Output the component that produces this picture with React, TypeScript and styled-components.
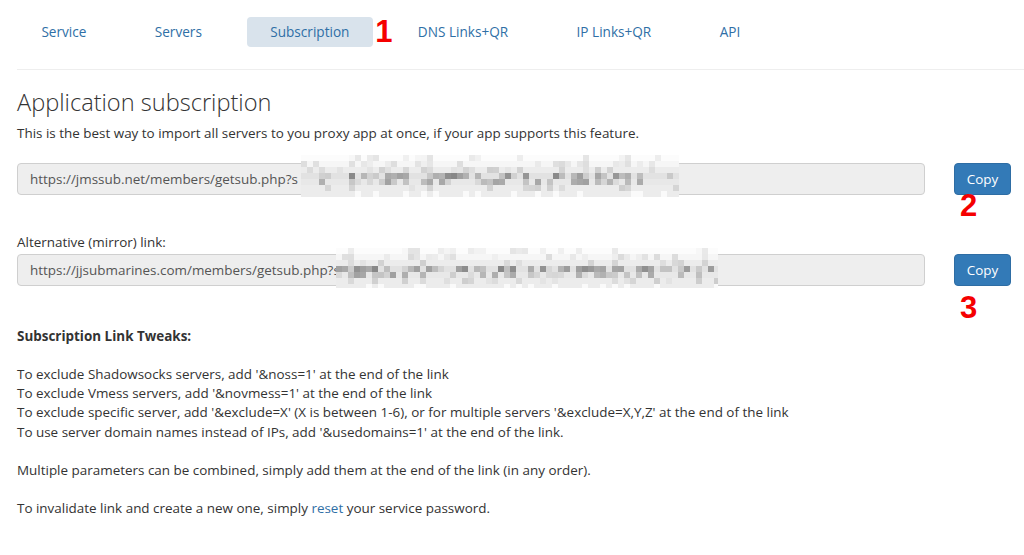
import React from "react";
import styled, { createGlobalStyle } from "styled-components";

const Global = createGlobalStyle`
  html, body { margin: 0; padding: 0; background: #fff; }
  body { font-family: "Open Sans", "Liberation Sans", sans-serif; color: #333; font-size: 13.45px; }
  * { box-sizing: border-box; }
`;

const Page = styled.div`
  width: 1024px;
  height: 555px;
  overflow: hidden;
  padding-left: 17px;
`;

const Nav = styled.nav`
  display: flex;
  gap: 22.2px;
  padding: 17px 0 22px 1.3px;
  border-bottom: 1px solid #eeeeee;
`;

const Tab = styled.a<{ $active?: boolean }>`
  position: relative;
  display: block;
  padding: 5px 23.1px;
  line-height: 20px;
  font-size: 13.6px;
  color: #2f6fa6;
  text-decoration: none;
  border-radius: 4px;
  background: ${(p) => (p.$active ? "#d9e3ec" : "transparent")};
`;

const Marker = styled.span<{ $left: number; $top: number }>`
  position: absolute;
  left: ${(p) => p.$left}px;
  top: ${(p) => p.$top}px;
  font-family: "Liberation Sans", Arial, sans-serif;
  font-weight: 700;
  font-size: 31px;
  line-height: 1;
  color: #f50000;
  pointer-events: none;
`;

const Main = styled.main`
  padding-right: 13px;
`;

const Heading = styled.h2`
  margin: 17px 0 7px;
  font-family: "Open Sans", sans-serif;
  font-weight: 300;
  font-size: 23.6px;
  line-height: 30px;
  color: #333;
`;

const Text = styled.p<{ $mt?: number }>`
  margin: ${(p) => p.$mt ?? 0}px 0 0;
  font-size: 13.45px;
  line-height: 19.1px;
  color: #333;
`;

const Strong = styled.strong`
  font-weight: 700;
`;

const Link = styled.a`
  color: #2f6fa6;
  text-decoration: none;
`;

const Row = styled.div<{ $mt: number }>`
  display: flex;
  align-items: center;
  gap: 29px;
  margin-top: ${(p) => p.$mt}px;
`;

const Field = styled.div`
  position: relative;
  flex: 1;
  height: 32px;
  padding: 0 12px;
  display: flex;
  align-items: center;
  background: #eeeeee;
  border: 1px solid #cfcfcf;
  border-radius: 4px;
  font-size: 13.45px;
  color: #555;
  white-space: nowrap;
`;

const Mosaic = styled.svg<{ $left: number; $top: number }>`
  position: absolute;
  left: ${(p) => p.$left}px;
  top: ${(p) => p.$top}px;
`;

const ButtonWrap = styled.div`
  position: relative;
  width: 57px;
`;

const CopyButton = styled.button`
  width: 57px;
  height: 32px;
  border: 1px solid #2e6da4;
  border-radius: 4px;
  background: #337ab7;
  color: #fff;
  font-family: "Open Sans", sans-serif;
  font-size: 13.45px;
  padding: 0;
`;

const Label = styled.div`
  margin-top: 38px;
  font-size: 13.45px;
  line-height: 19px;
  color: #333;
`;

function rng(seed: number) {
  let s = seed;
  return () => {
    s = (s * 1103515245 + 12345) & 0x7fffffff;
    return s / 0x7fffffff;
  };
}

function MosaicBlock({ width, height, seed, left, top }: { width: number; height: number; seed: number; left: number; top: number }) {
  const r = rng(seed);
  const cell = 6;
  const cols = Math.ceil(width / cell);
  const rows = Math.ceil(height / cell);
  const cells: React.ReactNode[] = [];
  for (let y = 0; y < rows; y++) {
    for (let x = 0; x < cols; x++) {
      const v = r();
      let g: number;
      if (y === 0) g = v < 0.25 ? 228 + Math.floor(r() * 20) : 252;
      else if (y === 1) g = v < 0.35 ? 218 + Math.floor(r() * 22) : 246;
      else if (y === rows - 1) g = v < 0.2 ? 250 : 236;
      else if (y === 3) g = v < 0.6 ? 135 + Math.floor(r() * 80) : 226;
      else if (y === 4) g = v < 0.45 ? 160 + Math.floor(r() * 60) : 232;
      else g = v < 0.25 ? 205 + Math.floor(r() * 25) : 236;
      cells.push(<rect key={`${x}-${y}`} x={x * cell} y={y * cell} width={cell} height={cell} fill={`rgb(${g},${g},${g})`} />);
    }
  }
  return (
    <Mosaic $left={left} $top={top} width={width} height={height} viewBox={`0 0 ${width} ${height}`}>
      {cells}
    </Mosaic>
  );
}

export default function App() {
  return (
    <Page>
      <Global />
      <Nav>
        <Tab>Service</Tab>
        <Tab>Servers</Tab>
        <Tab $active>
          Subscription
          <Marker $left={128} $top={-1}>1</Marker>
        </Tab>
        <Tab>DNS Links+QR</Tab>
        <Tab>IP Links+QR</Tab>
        <Tab>API</Tab>
      </Nav>
      <Main>
        <Heading>Application subscription</Heading>
        <Text>This is the best way to import all servers to you proxy app at once, if your app supports this feature.</Text>
        <Row $mt={20}>
          <Field>
            https://jmssub.net/members/getsub.php?s
            <MosaicBlock width={378} height={42} seed={7} left={283} top={-9} />
          </Field>
          <ButtonWrap>
            <CopyButton>Copy</CopyButton>
            <Marker $left={6} $top={27}>2</Marker>
          </ButtonWrap>
        </Row>
        <Label>Alternative (mirror) link:</Label>
        <Row $mt={2}>
          <Field>
            https://jjsubmarines.com/members/getsub.php?s
            <MosaicBlock width={382} height={40} seed={31} left={318} top={-7} />
          </Field>
          <ButtonWrap>
            <CopyButton>Copy</CopyButton>
            <Marker $left={6} $top={38}>3</Marker>
          </ButtonWrap>
        </Row>
        <Text $mt={41}>
          <Strong>Subscription Link Tweaks:</Strong>
          <br />
          <br />
          To exclude Shadowsocks servers, add '&amp;noss=1' at the end of the link
          <br />
          To exclude Vmess servers, add '&amp;novmess=1' at the end of the link
          <br />
          To exclude specific server, add '&amp;exclude=X' (X is between 1-6), or for multiple servers '&amp;exclude=X,Y,Z' at the end of the link
          <br />
          To use server domain names instead of IPs, add '&amp;usedomains=1' at the end of the link.
          <br />
          <br />
          Multiple parameters can be combined, simply add them at the end of the link (in any order).
          <br />
          <br />
          To invalidate link and create a new one, simply <Link>reset</Link> your service password.
        </Text>
      </Main>
    </Page>
  );
}
